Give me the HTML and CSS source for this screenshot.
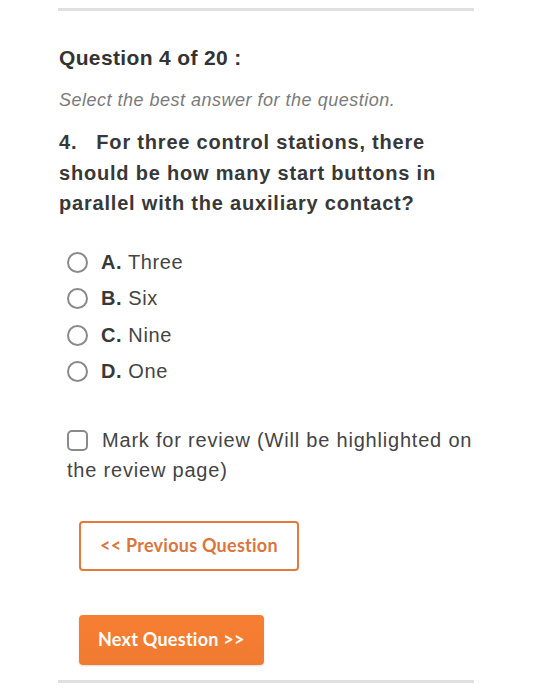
FILE: index.html
```html
<!DOCTYPE html>
<html>
<head>
<meta charset="utf-8">
<link rel="stylesheet" href="styles.css">
</head>
<body>
<div class="page">
  <div class="rule rule-top"></div>
  <h2 class="q-title">Question 4 of 20 :</h2>
  <p class="hint">Select the best answer for the question.</p>
  <p class="question">4.&nbsp;&nbsp;&nbsp;For three control stations, there should be how many start buttons in parallel with the auxiliary contact?</p>
  <ul class="options">
    <li class="option"><span class="radio"></span><span class="label"><b>A.</b> Three</span></li>
    <li class="option"><span class="radio"></span><span class="label"><b>B.</b> Six</span></li>
    <li class="option"><span class="radio"></span><span class="label"><b>C.</b> Nine</span></li>
    <li class="option"><span class="radio"></span><span class="label"><b>D.</b> One</span></li>
  </ul>
  <p class="review"><span class="checkbox"></span>Mark for review (Will be highlighted on the review page)</p>
  <div class="buttons">
    <button class="btn btn-prev">&lt;&lt; Previous Question</button>
    <button class="btn btn-next">Next Question &gt;&gt;</button>
  </div>
  <div class="rule rule-bottom"></div>
</div>
</body>
</html>
```
FILE: styles.css
```css
html, body {
  margin: 0;
  padding: 0;
  background: #fff;
}
body {
  font-family: "Liberation Sans", Arial, sans-serif;
  color: #333;
}
.page {
  width: 416px;
  margin-left: 58px;
  padding-top: 8px;
}
.rule {
  height: 3px;
  background: #e0e0e0;
}
.q-title {
  margin: 35px 0 0 1px;
  font-size: 21px;
  line-height: 24px;
  font-weight: bold;
  letter-spacing: 0.35px;
  color: #333;
}
.hint {
  margin: 20px 0 0 1px;
  font-size: 18px;
  line-height: 20px;
  font-style: italic;
  letter-spacing: 0.5px;
  color: #7a7a7a;
}
.question {
  margin: 17px 0 0 1px;
  font-size: 20px;
  line-height: 30.5px;
  font-weight: bold;
  letter-spacing: 0.8px;
  color: #383838;
}
.options {
  list-style: none;
  margin: 25.5px 0 0 9px;
  padding: 0;
}
.option {
  display: flex;
  align-items: center;
  height: 36.5px;
  font-size: 20px;
  letter-spacing: 0.6px;
  color: #444;
}
.option b {
  color: #383838;
}
.radio {
  width: 17px;
  height: 17px;
  border: 2px solid #8a8a8a;
  border-radius: 50%;
  margin-right: 13px;
  flex: none;
}
.review {
  margin: 35px 0 0 9px;
  font-size: 20px;
  line-height: 30px;
  letter-spacing: 0.8px;
  color: #444;
}
.checkbox {
  display: inline-block;
  box-sizing: border-box;
  width: 21px;
  height: 21px;
  border: 2px solid #8a8a8a;
  border-radius: 5px;
  margin-right: 14px;
  vertical-align: -4px;
}
.buttons {
  display: flex;
  flex-direction: column;
  align-items: flex-start;
  gap: 44px;
  margin: 36px 0 0 21px;
}
.btn {
  box-sizing: border-box;
  height: 50px;
  padding: 0 19px 3px;
  border-radius: 4px;
  font-family: Lato, "Liberation Sans", sans-serif;
  font-weight: bold;
  font-size: 18px;
  letter-spacing: 0.25px;
  cursor: pointer;
}
.btn-prev {
  background: #fff;
  border: 2px solid #e37a3c;
  color: #d9763d;
}
.btn-next {
  border: none;
  background: linear-gradient(#f67f33, #f07a30);
  color: #fff;
  box-shadow: 0 1px 2px rgba(0,0,0,0.15);
}
.rule-bottom {
  margin-top: 15px;
}
```
